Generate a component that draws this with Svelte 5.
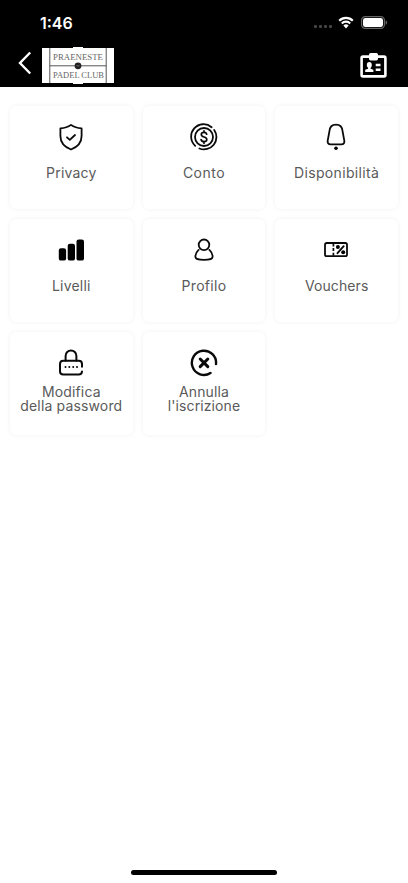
<script lang="ts">
  type MenuItem = {
    icon: string;
    lines: string[];
    spacing: number;
  };

  const items: MenuItem[] = [
    { icon: "privacy", lines: ["Privacy"], spacing: 0.2 },
    { icon: "account", lines: ["Conto"], spacing: 0.5 },
    { icon: "bell", lines: ["Disponibilità"], spacing: 0.35 },
    { icon: "levels", lines: ["Livelli"], spacing: 0.2 },
    { icon: "profile", lines: ["Profilo"], spacing: 0.3 },
    { icon: "voucher", lines: ["Vouchers"], spacing: 0.1 },
    { icon: "password", lines: ["Modifica", "della password"], spacing: 0.15 },
    { icon: "cancel", lines: ["Annulla", "l'iscrizione"], spacing: 0.1 },
  ];
</script>

<div class="screen">
  <header>
    <div class="status">
      <span class="time">1:46</span>
      <div class="signals">
        <div class="dots"><i></i><i></i><i></i><i></i></div>
        <svg class="wifi" width="16" height="13" viewBox="0 0 16 13">
          <path d="M1.2 4.7a9.6 9.6 0 0 1 13.6 0" />
          <path d="M3.8 7.4a5.9 5.9 0 0 1 8.4 0" />
          <path class="tip" d="M5.4 9.6a3.7 3.7 0 0 1 5.2 0L8 12.4z" />
        </svg>
        <svg class="battery" width="27" height="13" viewBox="0 0 27 13">
          <rect class="shell" x=".6" y=".6" width="22.8" height="11.8" rx="3.6" />
          <rect x="2" y="2" width="20" height="9" rx="2.3" fill="#fff" />
          <path d="M24.6 4.2c2 .8 2 3.8 0 4.6z" fill="#666" />
        </svg>
      </div>
    </div>

    <nav>
      <button class="back" aria-label="Indietro">
        <svg width="14" height="24" viewBox="0 0 14 24">
          <path d="M12.2 1.5 2 12l10.2 10.5" />
        </svg>
      </button>
      <svg class="logo" width="73" height="38" viewBox="0 0 73 38">
        <path d="M0 1h31V0h10v1h31v35H41v1H31v-1H0z" fill="#fff" />
        <path d="M7.8 1v35M64.2 1v35M7.8 18.8h56.4" stroke="#555" />
        <circle cx="36" cy="18.8" r="3.4" fill="#222" />
        <path d="M34.5 18.8h3" stroke="#888" stroke-width=".7" />
        <text x="11" y="13.2" textLength="50" lengthAdjust="spacingAndGlyphs">PRAENESTE</text>
        <text x="11" y="31.2" textLength="51" lengthAdjust="spacingAndGlyphs">PADEL CLUB</text>
      </svg>
      <button class="badge" aria-label="Tessera">
        <svg width="27" height="25" viewBox="0 0 27 25">
          <rect x="1.6" y="3.6" width="23.8" height="19.8" rx="1.3" fill="none" stroke="#fff" stroke-width="2.6" />
          <rect x="9" y="0" width="9" height="7.4" rx="1.6" fill="#fff" />
          <ellipse cx="9.3" cy="12" rx="2.5" ry="3" fill="#fff" />
          <path d="M8.1 13.5h2.5v2.2l2.8 1.1V19H5.2v-2.2l2.9-1.1z" fill="#fff" />
          <path d="M15.7 12.1h4.8M15.7 16.8h4.8" stroke="#fff" stroke-width="2.5" />
        </svg>
      </button>
    </nav>
  </header>

  <main>
    {#each items as item}
      <div class="card">
        <svg class="icon" width="28" height="28" viewBox="0 0 28 28">
          {#if item.icon === "privacy"}
            <path d="M14 1.9c-2.9 2.2-6.4 3.3-10.6 3.5V13c0 6.5 4.200 11 10.600 13.500 6.400-2.500 10.600-7 10.600-13.500V5.400C20.400 5.200 16.900 4.100 14 1.900z" />
            <path d="m10 14.300 2.800 2.600 5.200-4.900" />
          {:else if item.icon === "account"}
            <path d="M5.200 22.800A12.400 12.400 0 0 1 21.600 4.200M24.200 6.900A12.400 12.400 0 0 1 9.400 25.500" />
            <circle cx="14" cy="14" r="9" />
            <path stroke-width="1.700" d="M16.700 11.200c-.3-1.200-1.300-1.800-2.700-1.800-1.600 0-2.700.8-2.700 2.200 0 3.200 5.500 1.600 5.500 4.800 0 1.400-1.200 2.200-2.800 2.200s-2.700-.8-2.900-2.100M14 7.800v1.600M14 18.600v1.700" />
          {:else if item.icon === "bell"}
            <path d="M14 1.700c-4.400 0-6.300 3-6.600 6.600l-1.700 9.300c-.4 2.300.8 3.800 2.800 3.800h11c2 0 3.200-1.500 2.800-3.800l-1.700-9.300C20.300 4.700 18.400 1.700 14 1.700z" />
            <circle class="solid" cx="14" cy="25.200" r="1.800" />
          {:else if item.icon === "levels"}
            <rect class="solid" x="1.800" y="12.300" width="7.300" height="12.300" rx="2.200" />
            <rect class="solid" x="10.700" y="7.800" width="7.300" height="16.800" rx="2.200" />
            <rect class="solid" x="19.500" y="3.400" width="7.500" height="21.200" rx="2.200" />
          {:else if item.icon === "profile"}
            <circle cx="14" cy="8.800" r="5.300" />
            <path d="M8.600 13.900c-2.100 1.900-3.300 4.500-3.200 7 .1 1.900 3.600 3 8.600 3s8.500-1.100 8.600-3c.1-2.500-1.100-5.100-3.200-7" />
          {:else if item.icon === "voucher"}
            <rect x="3" y="7" width="22" height="13.200" rx="1.800" />
            <path stroke-width="1.700" stroke-linecap="butt" d="M11.400 7.700v2.700M11.400 12v3M11.400 16.700v3" />
            <path stroke-width="1.900" d="m15.500 17.200 6.200-7" />
            <circle class="solid" cx="15.900" cy="11.100" r="2" />
            <circle class="solid" cx="21.200" cy="16.300" r="2" />
          {:else if item.icon === "password"}
            <g stroke-width="2">
              <path d="M8.600 11.700V6.900a5.400 5.400 0 0 1 10.800 0v4.800" />
              <path d="M25 17.700V15c0-2.100-1.200-3.300-3.300-3.300H6.300C4.200 11.700 3 12.900 3 15v7.200c0 2.100 1.200 3.300 3.300 3.300h15.400c2 0 3.200-.9 3.300-3" />
            </g>
            <path stroke-width="2" d="M8.500 18.100h.02M12.300 18.100h.02M16.200 18.100h.02M20 18.100h.02" />
          {:else if item.icon === "cancel"}
            <path stroke-width="2.400" d="M26 15.100A12.100 12.100 0 1 0 20.500 24" />
            <path stroke-width="3" d="m10.200 10 7.600 7.600M17.800 10l-7.600 7.600" />
          {/if}
        </svg>
        <div class="label" style={`letter-spacing:${item.spacing}px`}>
          {#each item.lines as line}
            <span>{line}</span>
          {/each}
        </div>
      </div>
    {/each}
  </main>

  <footer><div class="home"></div></footer>
</div>

<style>
  :global(body) {
    background: #fff;
  }
  .screen {
    display: flex;
    flex-direction: column;
    height: 883px;
    overflow: hidden;
    font-family: Inter, "Liberation Sans", sans-serif;
  }
  header {
    height: 87px;
    background: #000;
    color: #fff;
  }
  .status {
    display: flex;
    align-items: center;
    justify-content: space-between;
    height: 44px;
    padding: 0 20px 0 40px;
  }
  .time {
    font-size: 16px;
    font-weight: 600;
    line-height: 20px;
    padding-top: 1px;
  }
  .signals {
    display: flex;
    align-items: center;
  }
  .dots {
    display: flex;
    gap: 2px;
    padding-top: 9px;
    margin-right: 6px;
  }
  .dots i {
    width: 3px;
    height: 3px;
    border-radius: 1px;
    background: #444;
  }
  .wifi {
    margin-right: 7px;
  }
  .wifi path {
    fill: none;
    stroke: #fff;
    stroke-width: 2.2;
  }
  .wifi .tip {
    fill: #fff;
    stroke: none;
  }
  .battery .shell {
    fill: none;
    stroke: #666;
    stroke-width: 1.2;
  }
  nav {
    display: flex;
    align-items: center;
    height: 43px;
    padding: 0 21px 0 18px;
  }
  button {
    display: flex;
    padding: 0;
    border: 0;
    background: none;
  }
  .back {
    margin-right: 9.5px;
    margin-top: -5px;
  }
  .back path {
    fill: none;
    stroke: #fff;
    stroke-width: 2.4;
  }
  .logo text {
    font-family: "Liberation Serif", serif;
    font-size: 9.2px;
    fill: #666;
  }
  .badge {
    margin-left: auto;
  }
  main {
    flex: 1;
    display: grid;
    grid-template-columns: repeat(3, 1fr);
    grid-auto-rows: 103px;
    gap: 10px;
    padding: 19px 10px 0;
  }
  .card {
    display: flex;
    flex-direction: column;
    align-items: center;
    box-sizing: border-box;
    padding-top: 17px;
    border-radius: 6px;
    background: #fff;
    box-shadow: 0 0 5px rgba(0, 0, 0, 0.06);
  }
  .icon {
    flex: none;
    margin-right: 0.5px;
    fill: none;
    stroke: #0a0a0a;
    stroke-width: 1.8;
    stroke-linecap: round;
    stroke-linejoin: round;
  }
  .icon .solid {
    fill: #000;
    stroke: none;
  }
  .label {
    display: flex;
    flex-direction: column;
    justify-content: center;
    align-items: center;
    height: 28px;
    margin-top: 8px;
    color: #5a5a5a;
    font-size: 14px;
    font-weight: 400;
    line-height: 14px;
    white-space: nowrap;
  }
  footer {
    display: flex;
    justify-content: center;
    height: 13px;
  }
  .home {
    width: 146px;
    height: 5px;
    border-radius: 3px;
    background: #000;
  }
</style>
